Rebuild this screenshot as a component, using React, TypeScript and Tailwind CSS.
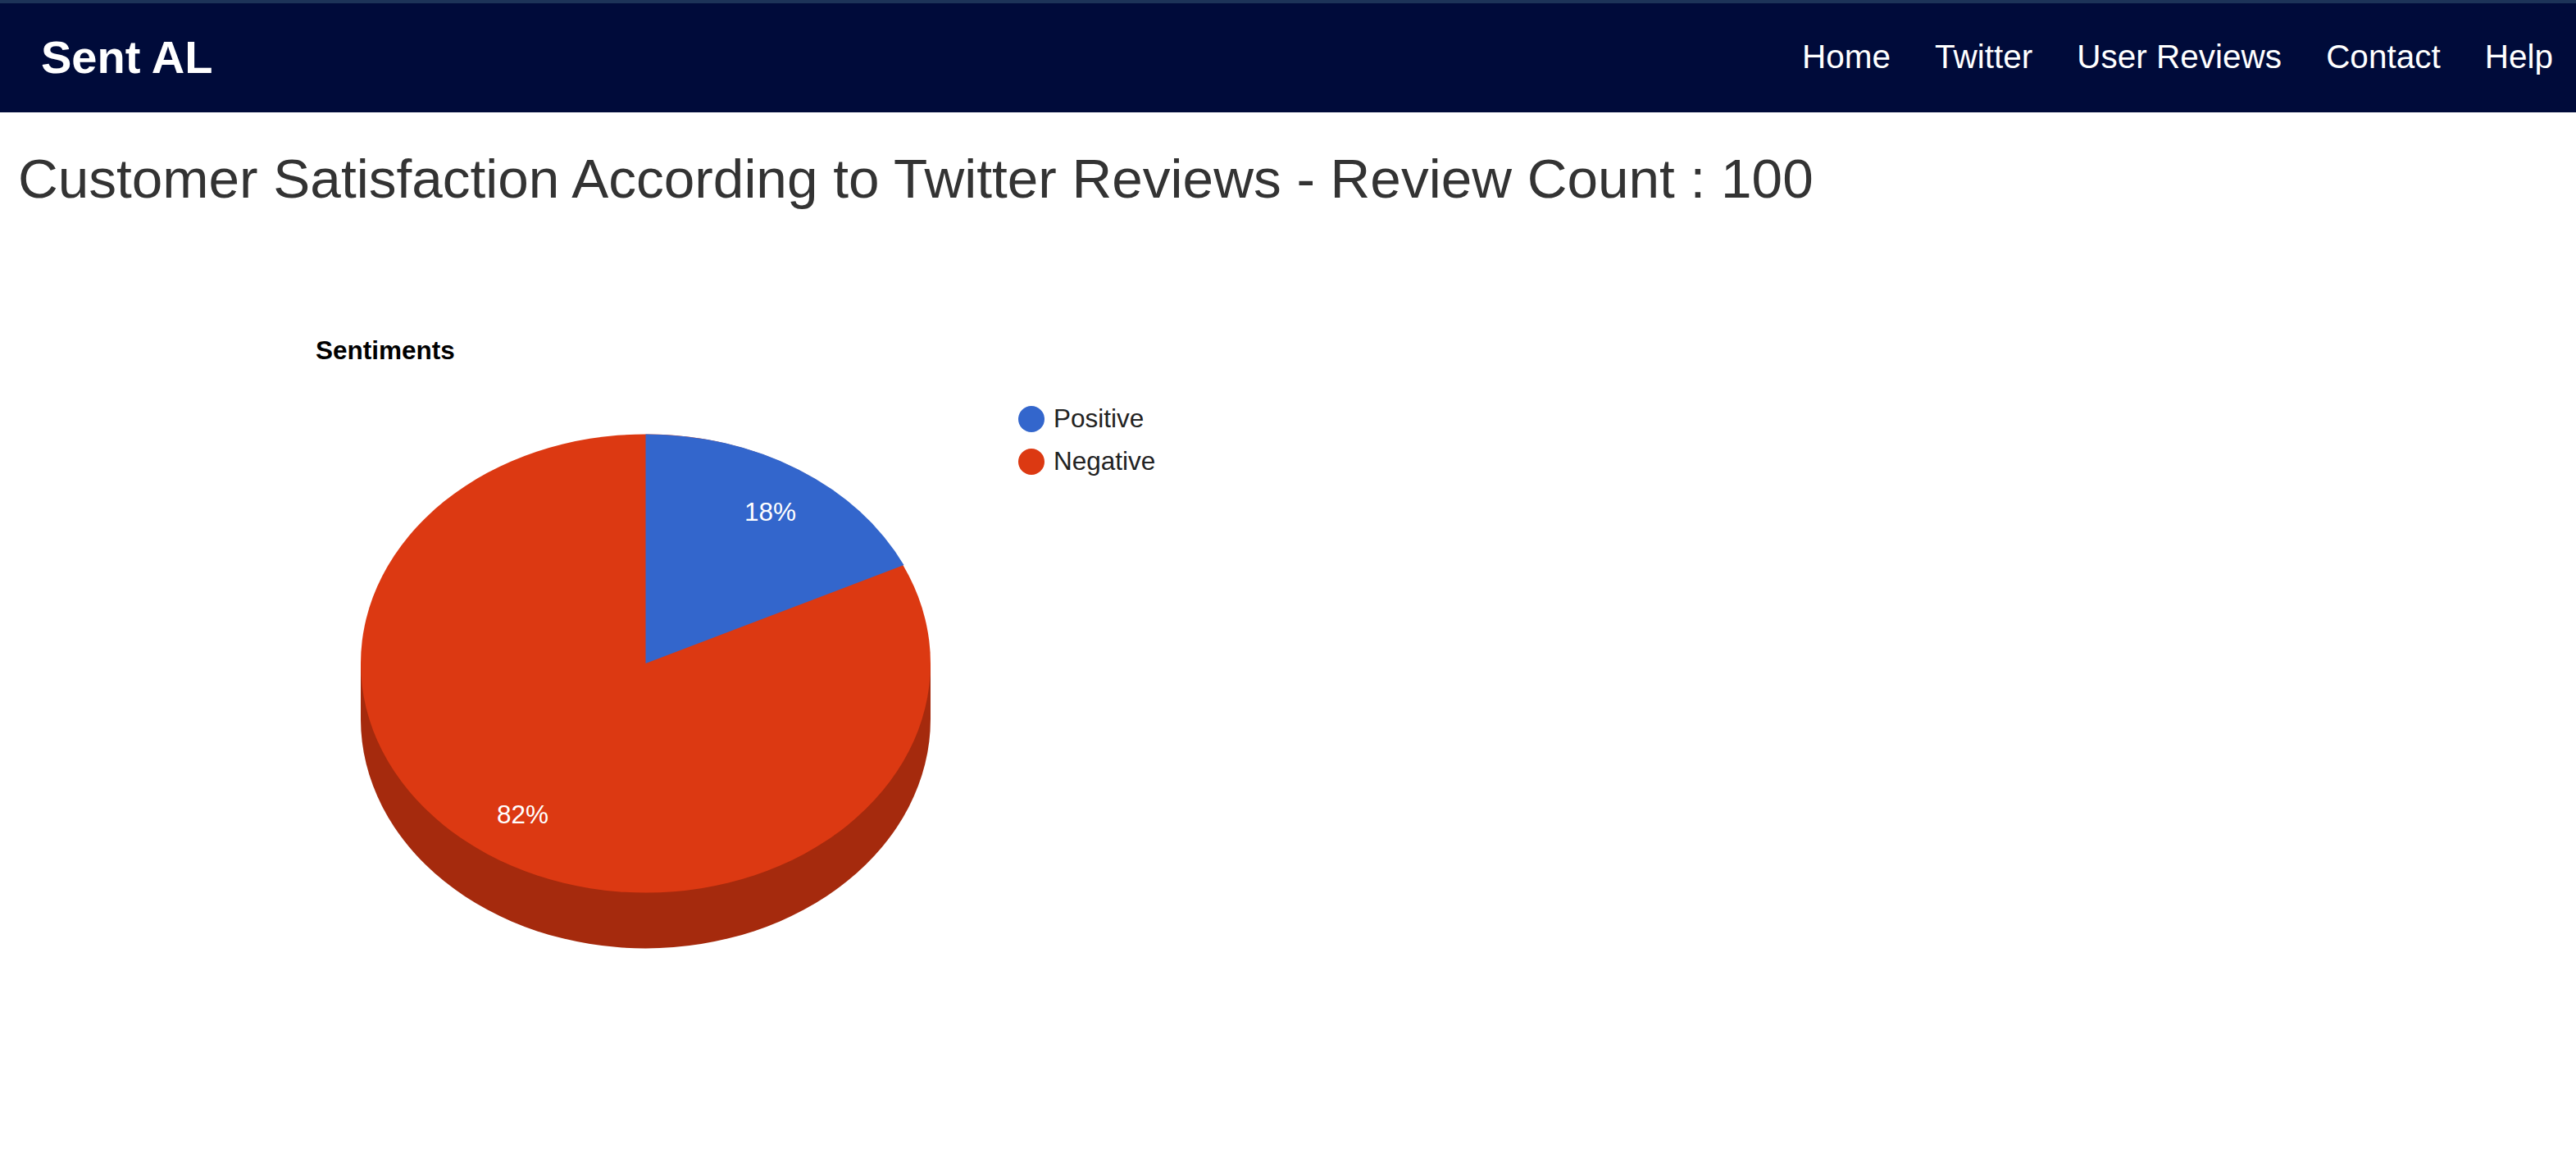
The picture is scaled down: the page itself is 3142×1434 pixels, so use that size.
import React from "react";

const navLinks = ["Home", "Twitter", "User Reviews", "Contact", "Help"];

const SentimentChart = () => {
  return (
    <svg
      className="block ml-[360px] mt-[126px] w-[1100px] h-[800px]"
      viewBox="360 380 1100 800"
      fontFamily="'Liberation Sans', Arial, sans-serif"
    >
      <text x="385" y="437" fontSize="31.5" fontWeight="700" fill="#000000">
        Sentiments
      </text>

      {/* side of the 3d pie */}
      <path
        d="M440 808 V876 A347.5 279.5 0 0 0 1135 876 V808 Z"
        fill="#a52a0d"
      />
      <ellipse cx="787.5" cy="808" rx="347.5" ry="279.5" fill="#dc3912" />
      <path
        d="M787.5 808 V528.5 A347.5 279.5 0 0 1 1102.5 688 Z"
        fill="#3366cc"
      />

      <text x="908" y="634" fontSize="31.5" fill="#ffffff">
        18%
      </text>
      <text x="606" y="1003" fontSize="31.5" fill="#ffffff">
        82%
      </text>

      <circle cx="1258" cy="510" r="16" fill="#3366cc" />
      <text x="1285" y="520" fontSize="31.5" fill="#222222">
        Positive
      </text>
      <circle cx="1258" cy="562" r="16" fill="#dc3912" />
      <text x="1285" y="572" fontSize="31.5" fill="#222222">
        Negative
      </text>
    </svg>
  );
};

export default function App() {
  return (
    <div className="min-h-[1434px] bg-white font-['Liberation_Sans',Arial,sans-serif] overflow-hidden">
      <nav className="flex items-center justify-between h-[137px] bg-[#000b3a] border-t-[4px] border-[#1c3358] pl-[50px] pr-[28px]">
        <a className="text-[56px] font-bold text-white leading-none -mt-[2px]">Sent AL</a>
        <ul className="flex items-center gap-[54px] -mt-[2px]">
          {navLinks.map((item) => (
            <li key={item} className="text-[40.5px] text-white leading-none">
              {item}
            </li>
          ))}
        </ul>
      </nav>
      <h1 className="mt-[44px] ml-[22px] text-[67.5px] leading-[1.1] text-[#333333]">
        Customer Satisfaction According to Twitter Reviews - Review Count : 100
      </h1>
      <SentimentChart />
    </div>
  );
}
